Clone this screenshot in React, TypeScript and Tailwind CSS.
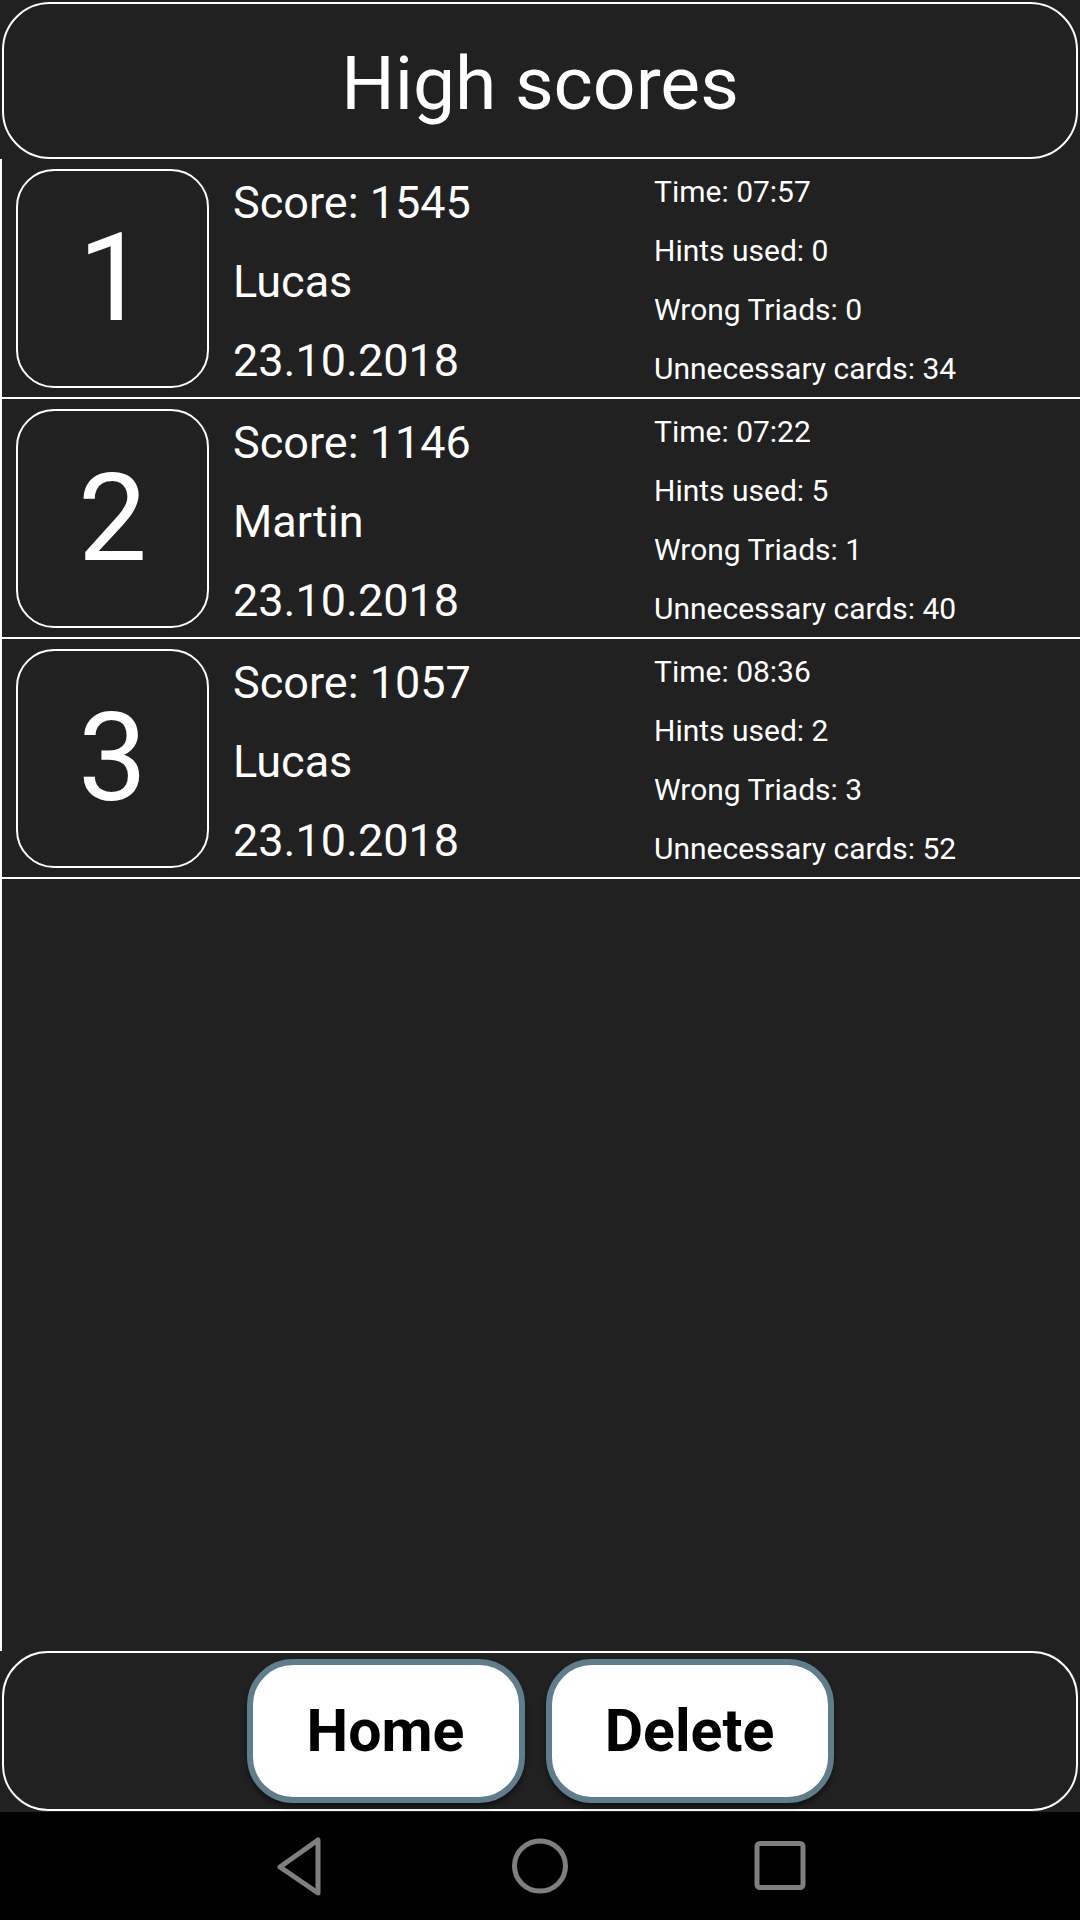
import React from "react";

type Entry = {
  rank: number;
  score: number;
  name: string;
  date: string;
  time: string;
  hints: number;
  wrong: number;
  cards: number;
};

const entries: Entry[] = [
  { rank: 1, score: 1545, name: "Lucas", date: "23.10.2018", time: "07:57", hints: 0, wrong: 0, cards: 34 },
  { rank: 2, score: 1146, name: "Martin", date: "23.10.2018", time: "07:22", hints: 5, wrong: 1, cards: 40 },
  { rank: 3, score: 1057, name: "Lucas", date: "23.10.2018", time: "08:36", hints: 2, wrong: 3, cards: 52 },
];

function ScoreRow({ e }: { e: Entry }) {
  return (
    <div className="flex h-[240px] items-center border-b-2 border-white">
      <div className="ml-[14px] flex h-[219px] w-[193px] shrink-0 items-center justify-center rounded-[38px] border-2 border-white">
        <span className="text-[123px] leading-none">{e.rank}</span>
      </div>
      <div className="ml-[24px] flex h-full w-[421px] flex-col pt-[4px] text-[45px] leading-[79px]">
        <span>Score: {e.score}</span>
        <span>{e.name}</span>
        <span>{e.date}</span>
      </div>
      <div className="flex h-full flex-col pt-[3px] text-[30px] leading-[59px]">
        <span>Time: {e.time}</span>
        <span>Hints used: {e.hints}</span>
        <span>Wrong Triads: {e.wrong}</span>
        <span>Unnecessary cards: {e.cards}</span>
      </div>
    </div>
  );
}

function NavBar() {
  return (
    <div className="flex h-[108px] items-center justify-center bg-black">
      <div className="flex w-[240px] justify-center">
        <svg width="60" height="64" viewBox="0 0 60 64">
          <path
            d="M48 6 L48 59 L10 33 Z"
            fill="none"
            stroke="#7f7f7f"
            strokeWidth="5"
            strokeLinejoin="round"
          />
        </svg>
      </div>
      <div className="flex w-[240px] justify-center">
        <svg width="60" height="60" viewBox="0 0 60 60">
          <ellipse cx="30" cy="30" rx="25.5" ry="25" fill="none" stroke="#7f7f7f" strokeWidth="5" />
        </svg>
      </div>
      <div className="flex w-[240px] justify-center">
        <svg width="56" height="54" viewBox="0 0 56 54">
          <rect x="5" y="4.5" width="46" height="44" rx="3" fill="none" stroke="#7f7f7f" strokeWidth="5" />
        </svg>
      </div>
    </div>
  );
}

export default function App() {
  return (
    <div className="flex h-[1920px] w-[1080px] flex-col bg-[#212121] font-['Roboto',sans-serif] text-white">
      <div className="mx-[2px] mt-[2px] flex h-[157px] items-center justify-center rounded-[48px] border-[2.5px] border-white">
        <h1 className="pt-[6px] text-[75px] leading-none">High scores</h1>
      </div>
      <div className="flex-1 border-l-2 border-white">
        {entries.map((e) => (
          <ScoreRow key={e.rank} e={e} />
        ))}
      </div>
      <div className="mx-[2px] mb-[1px] flex h-[160px] items-center justify-center gap-[21px] rounded-[46px] border-[2.5px] border-white">
        <button className="h-[144px] w-[278px] rounded-[46px] border-[6px] border-[#607d8b] bg-white text-[59px] font-bold text-black shadow-[0_4px_5px_rgba(0,0,0,0.45)]">
          Home
        </button>
        <button className="h-[144px] w-[288px] rounded-[46px] border-[6px] border-[#607d8b] bg-white text-[59px] font-bold text-black shadow-[0_4px_5px_rgba(0,0,0,0.45)]">
          Delete
        </button>
      </div>
      <NavBar />
    </div>
  );
}
